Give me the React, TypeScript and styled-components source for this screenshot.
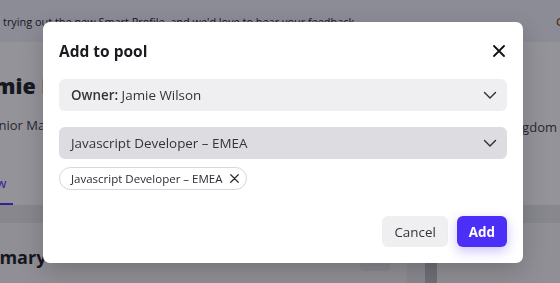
import React from "react";
import styled, { createGlobalStyle } from "styled-components";

const GlobalStyle = createGlobalStyle`
    html, body {
        margin: 0;
        padding: 0;
        width: 560px;
        height: 283px;
        overflow: hidden;
        font-family: "Open Sans", "Liberation Sans", sans-serif;
        color: #2b2b33;
    }
`;

const Page = styled.div`
    width: 560px;
    height: 283px;
    overflow: hidden;
    background: #ececee;
`;

const Banner = styled.div`
    height: 42px;
    background: #ebebf4;
    display: flex;
    align-items: center;
    justify-content: space-between;
    padding: 0 0 0 3px;
    box-sizing: border-box;
    font-size: 10.9px;
    color: #22222a;
    white-space: nowrap;
    overflow: hidden;
`;

const BannerLink = styled.span`
    width: 4px;
    overflow: hidden;
    font-weight: 600;
    color: #8a4a14;
`;

const Header = styled.div`
    background: #f8f8f9;
    height: 163px;
    display: flex;
    justify-content: space-between;
    overflow: hidden;
`;

const Identity = styled.div`
    padding-top: 30px;
    display: flex;
    flex-direction: column;
`;

const Name = styled.h1`
    margin: 0 0 0 -27px;
    font-size: 21.5px;
    font-weight: 800;
    color: #1c1c22;
    line-height: 28px;
    white-space: nowrap;
`;

const Role = styled.div`
    margin: 16px 0 0 -16px;
    font-size: 13px;
    line-height: 18px;
    color: #3a3a44;
    white-space: nowrap;
`;

const Tabs = styled.div`
    margin: 40px 0 0 -57px;
    display: flex;
    gap: 24px;
`;

const Tab = styled.div<{ $active?: boolean }>`
    font-size: 13px;
    line-height: 18px;
    padding: 0 7px 11px;
    color: ${p => (p.$active ? "#4b2ff6" : "#3a3a44")};
    border-bottom: 2px solid ${p => (p.$active ? "#4b2ff6" : "transparent")};
`;

const Location = styled.div`
    margin: 76px 3px 0 0;
    font-size: 13px;
    line-height: 18px;
    color: #3a3a44;
    white-space: nowrap;
`;

const Divider = styled.div`
    height: 18px;
    background: #e2e2e5;
`;

const Cards = styled.div`
    display: grid;
    grid-template-columns: 407px 30px 1fr;
`;

const Card = styled.div`
    background: #f1f1f3;
    height: 60px;
    padding: 22px 0 0;
    box-sizing: border-box;
    display: flex;
    justify-content: space-between;
    align-items: flex-start;
`;

const Rail = styled.div`
    background: #e6e6e9;
    display: flex;
    justify-content: flex-end;
    padding-top: 38px;
`;

const RailBar = styled.div`
    width: 12px;
    background: #b9b9bd;
`;

const CardTitle = styled.h2`
    margin: 0 0 0 -40px;
    font-size: 18px;
    line-height: 24px;
    font-weight: 700;
    color: #1c1c22;
`;

const CardAction = styled.div`
    width: 30px;
    height: 16px;
    margin: 10px 17px 0 0;
    border-radius: 4px;
    background: #e4e4e8;
`;

const Overlay = styled.div`
    position: fixed;
    inset: 0;
    background: rgba(18, 18, 30, 0.44);
`;

const Modal = styled.div`
    position: fixed;
    left: 43px;
    top: 22px;
    width: 480px;
    box-sizing: border-box;
    padding: 16px;
    background: #fff;
    border-radius: 7px;
    box-shadow: 0 8px 24px rgba(0, 0, 0, 0.2);
`;

const ModalHead = styled.div`
    display: flex;
    align-items: center;
    justify-content: space-between;
    height: 25px;
    margin-bottom: 16px;
`;

const ModalTitle = styled.h2`
    margin: 0;
    font-size: 15.5px;
    font-weight: 700;
    color: #1a1a1f;
`;

const IconButton = styled.button`
    border: 0;
    background: none;
    padding: 0;
    width: 16px;
    height: 16px;
    display: flex;
    align-items: center;
    justify-content: center;
    color: #111;
`;

const Select = styled.div<{ $active?: boolean }>`
    height: 32px;
    border-radius: 6px;
    background: ${p => (p.$active ? "#dcdce1" : "#efeff2")};
    display: flex;
    align-items: center;
    justify-content: space-between;
    padding: 0 10px 0 12px;
    font-size: 13.4px;
    color: #333339;
    & + & {
        margin-top: 16px;
    }
`;

const Strong = styled.b`
    font-weight: 600;
`;

const Chips = styled.div`
    display: flex;
    gap: 6px;
    margin-top: 8px;
`;

const Chip = styled.div`
    height: 23px;
    box-sizing: border-box;
    border: 1px solid #d6d6db;
    border-radius: 12px;
    padding: 0 7px 0 11px;
    display: flex;
    align-items: center;
    gap: 8px;
    font-size: 11.5px;
    color: #2b2b33;
`;

const Footer = styled.div`
    display: flex;
    justify-content: flex-end;
    gap: 9px;
    margin-top: 26px;
`;

const Button = styled.button<{ $primary?: boolean }>`
    height: 31px;
    border: 0;
    border-radius: 6px;
    padding: 0 12px;
    font-family: inherit;
    font-size: 13.4px;
    font-weight: ${p => (p.$primary ? 700 : 500)};
    color: ${p => (p.$primary ? "#fff" : "#333339")};
    background: ${p => (p.$primary ? "#4b2ff6" : "#efeff2")};
    box-shadow: ${p => (p.$primary ? "0 4px 12px rgba(75, 47, 246, 0.3)" : "none")};
`;

const Chevron = () => (
    <svg width="14" height="14" viewBox="0 0 14 14" fill="none">
        <path d="M1.5 4.5 7 10l5.5-5.5" stroke="#2b2b33" strokeWidth="1.4" strokeLinecap="round" strokeLinejoin="round" />
    </svg>
);

const Cross = ({ size, weight }: { size: number; weight: number }) => (
    <svg width={size} height={size} viewBox="0 0 12 12" fill="none">
        <path d="M1 1l10 10M11 1 1 11" stroke="currentColor" strokeWidth={weight} strokeLinecap="round" />
    </svg>
);

export default function App() {
    return (
        <>
            <GlobalStyle />
            <Page>
                <Banner>
                    <span>trying out the new Smart Profile, and we'd love to hear your feedback.</span>
                    <BannerLink>Give feedback</BannerLink>
                </Banner>
                <Header>
                    <Identity>
                        <Name>Jamie Lewis</Name>
                        <Role>Senior Manager</Role>
                        <Tabs>
                            <Tab $active>Overview</Tab>
                        </Tabs>
                    </Identity>
                    <Location>London, United Kingdom</Location>
                </Header>
                <Divider />
                <Cards>
                    <Card>
                        <CardTitle>Summary</CardTitle>
                        <CardAction />
                    </Card>
                    <Rail>
                        <RailBar />
                    </Rail>
                    <Card />
                </Cards>
            </Page>
            <Overlay />
            <Modal>
                <ModalHead>
                    <ModalTitle>Add to pool</ModalTitle>
                    <IconButton aria-label="Close">
                        <Cross size={12} weight={1.8} />
                    </IconButton>
                </ModalHead>
                <Select>
                    <span><Strong>Owner:</Strong> Jamie Wilson</span>
                    <Chevron />
                </Select>
                <Select $active>
                    <span>Javascript Developer – EMEA</span>
                    <Chevron />
                </Select>
                <Chips>
                    <Chip>
                        Javascript Developer – EMEA
                        <Cross size={9} weight={1.6} />
                    </Chip>
                </Chips>
                <Footer>
                    <Button>Cancel</Button>
                    <Button $primary>Add</Button>
                </Footer>
            </Modal>
        </>
    );
}
